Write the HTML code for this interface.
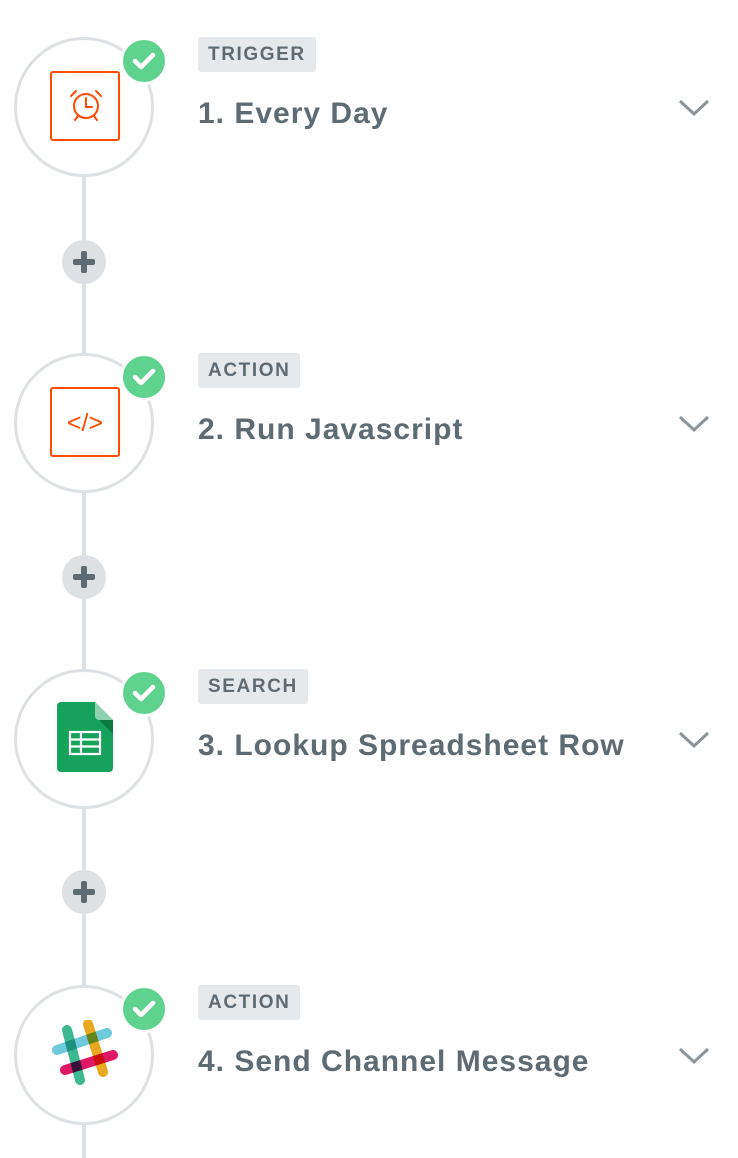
<!DOCTYPE html><html><head><style>
body{margin:0;width:738px;height:1158px;background:#fff;position:relative;overflow:hidden;font-family:"Liberation Sans",sans-serif}
.line{position:absolute;left:82px;width:4px;background:#dde1e3}
.circ{position:absolute;left:14px;width:134px;height:134px;border:3px solid #dde1e3;border-radius:50%;background:#fff;box-sizing:content-box}
.chk{position:absolute;left:123px;width:42px;height:42px;border-radius:50%;background:#5fd38d;border:3px solid #fff;margin:-3px}
.plus{position:absolute;left:62px;width:44px;height:44px;border-radius:50%;background:#dde1e3}
.plus:before{content:"";position:absolute;left:11px;top:19px;width:22px;height:6px;background:#5f6b73;border-radius:2px}
.plus:after{content:"";position:absolute;left:19px;top:11px;width:6px;height:22px;background:#5f6b73;border-radius:2px}
.tag{position:absolute;left:198px;height:35px;line-height:35px;padding:0 10px;background:#e6e9eb;border-radius:3px;color:#5f6b73;font-size:19px;font-weight:bold;letter-spacing:1.6px}
.title{position:absolute;left:198px;font-size:30px;color:#5f6b73;font-weight:bold;letter-spacing:1px}
.chev{position:absolute;left:678px}
.ob{position:absolute;left:50px;width:66px;height:66px;border:2px solid #ff4a00;border-radius:3px}
.sl path{mix-blend-mode:multiply}
</style></head><body>
<div class="line" style="top:170px;height:988px"></div>
<div class="plus" style="top:240px"></div>
<div class="plus" style="top:555px"></div>
<div class="plus" style="top:870px"></div>

<div class="circ" style="top:37px"></div>
<div class="ob" style="top:71px"><svg width="66" height="66" viewBox="0 0 66 66" fill="none" stroke="#ff4a00" stroke-width="2" stroke-linecap="round"><circle cx="34" cy="33" r="12"/><path d="M34 25v9h6M19 23l5-5M49 23l-5-5M23 47l3-4M45 47l-3-4"/></svg></div>
<svg class="chk" style="top:40px" viewBox="0 0 42 42"><path d="M12 21l6 6 12-12" stroke="#fff" stroke-width="4.5" fill="none" stroke-linecap="round" stroke-linejoin="round"/></svg>
<div class="tag" style="top:37px">TRIGGER</div>
<div class="title" style="top:97px">1. Every Day</div>
<svg class="chev" style="top:98px" width="32" height="20"><path d="M2 3l14 13 14-13" stroke="#8a949a" stroke-width="3" fill="none"/></svg>

<div class="circ" style="top:353px"></div>
<div class="ob" style="top:387px"><svg width="66" height="66" viewBox="0 0 66 66"><text x="33" y="42" text-anchor="middle" font-family="Liberation Sans" font-size="25" fill="#ff4a00">&lt;/&gt;</text></svg></div>
<svg class="chk" style="top:356px" viewBox="0 0 42 42"><path d="M12 21l6 6 12-12" stroke="#fff" stroke-width="4.5" fill="none" stroke-linecap="round" stroke-linejoin="round"/></svg>
<div class="tag" style="top:353px">ACTION</div>
<div class="title" style="top:413px">2. Run Javascript</div>
<svg class="chev" style="top:414px" width="32" height="20"><path d="M2 3l14 13 14-13" stroke="#8a949a" stroke-width="3" fill="none"/></svg>

<div class="circ" style="top:669px"></div>
<svg style="position:absolute;left:57px;top:702px" width="56" height="70" viewBox="0 0 56 70"><path d="M4 0h34l18 18v48a4 4 0 0 1-4 4H4a4 4 0 0 1-4-4V4a4 4 0 0 1 4-4z" fill="#16a25a"/><path d="M38 0v14a4 4 0 0 0 4 4h14z" fill="#8ed1b1"/><path d="M42 18l14 14V18z" fill="#0d7a40"/><g fill="none" stroke="#fff" stroke-width="2.2"><rect x="13" y="30" width="30" height="22"/><path d="M13 37.5h30M13 44.5h30M24 30v22"/></g></svg>
<svg class="chk" style="top:672px" viewBox="0 0 42 42"><path d="M12 21l6 6 12-12" stroke="#fff" stroke-width="4.5" fill="none" stroke-linecap="round" stroke-linejoin="round"/></svg>
<div class="tag" style="top:669px">SEARCH</div>
<div class="title" style="top:729px">3. Lookup Spreadsheet Row</div>
<svg class="chev" style="top:730px" width="32" height="20"><path d="M2 3l14 13 14-13" stroke="#8a949a" stroke-width="3" fill="none"/></svg>

<div class="circ" style="top:985px"></div>
<svg class="sl" style="position:absolute;left:52px;top:1020px" width="66" height="66" viewBox="0 0 66 66" stroke-linecap="round" stroke-width="10" fill="none"><path d="M5 30L55 13" stroke="#6ecadc"/><path d="M15 10l13 50" stroke="#3eb890"/><path d="M36 4l15 48" stroke="#e9a820"/><path d="M13 50L61 35" stroke="#e01765"/></svg>
<svg class="chk" style="top:988px" viewBox="0 0 42 42"><path d="M12 21l6 6 12-12" stroke="#fff" stroke-width="4.5" fill="none" stroke-linecap="round" stroke-linejoin="round"/></svg>
<div class="tag" style="top:985px">ACTION</div>
<div class="title" style="top:1045px">4. Send Channel Message</div>
<svg class="chev" style="top:1046px" width="32" height="20"><path d="M2 3l14 13 14-13" stroke="#8a949a" stroke-width="3" fill="none"/></svg>
</body></html>
